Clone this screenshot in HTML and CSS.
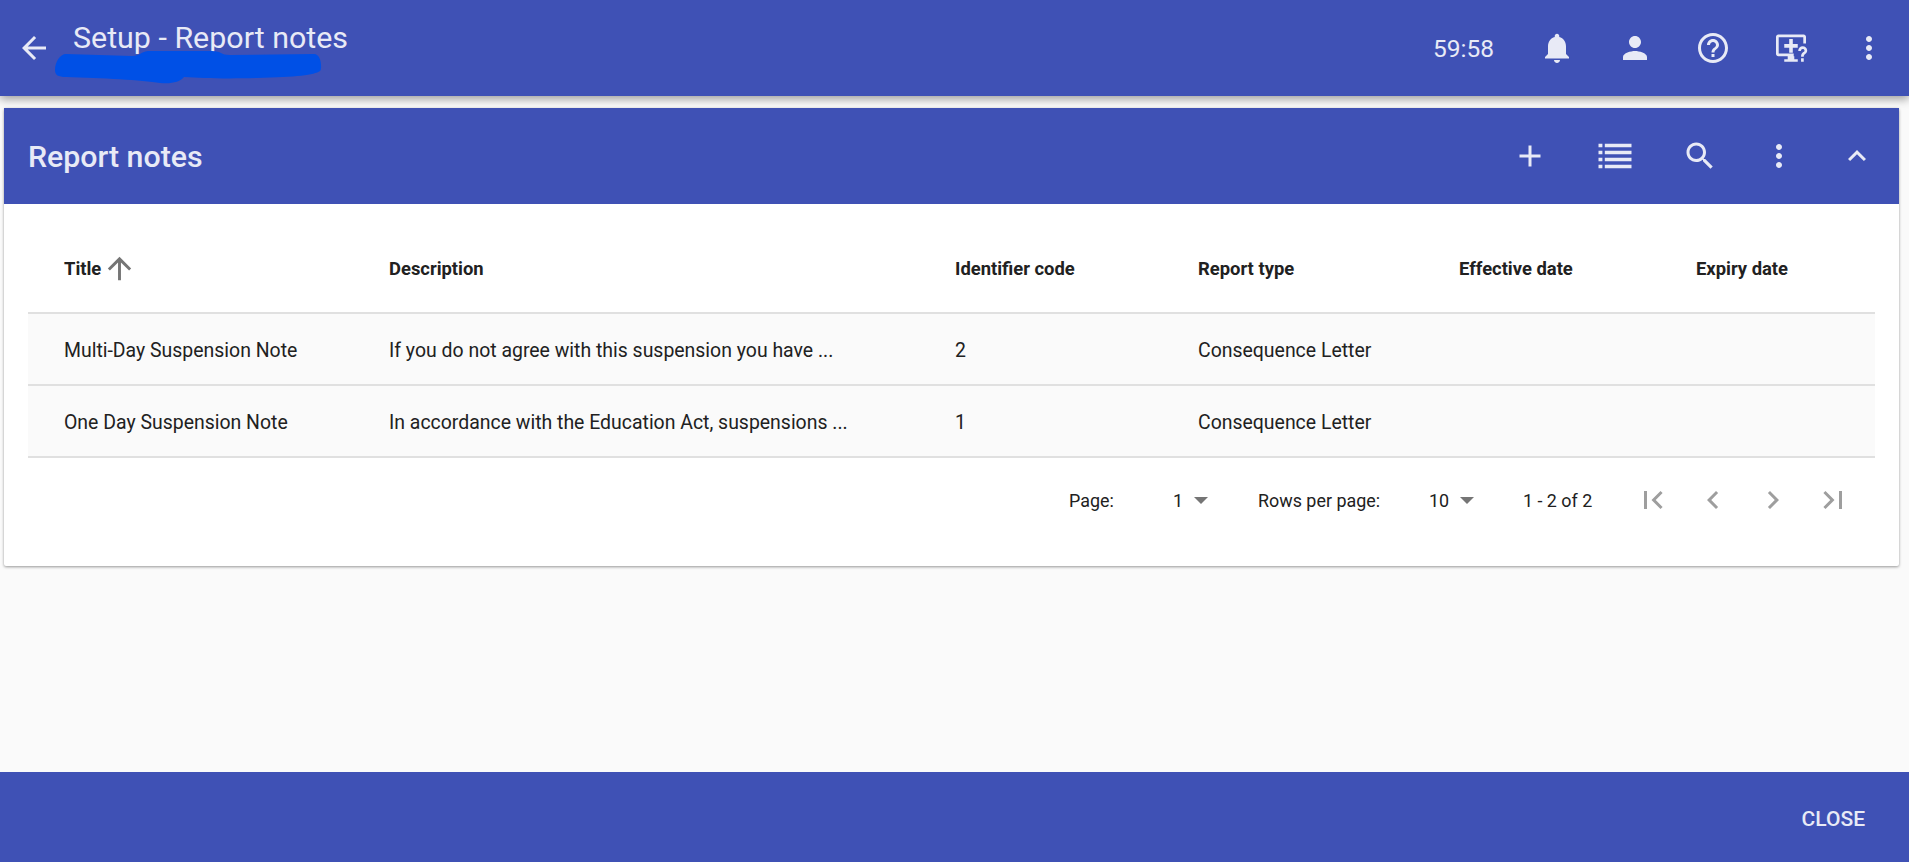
FILE: index.html
```html
<!DOCTYPE html>
<html lang="en">
<head>
<meta charset="utf-8">
<title>Setup - Report notes</title>
<link rel="stylesheet" href="styles.css">
</head>
<body>
<header class="topbar">
  <button class="icon-btn back"><svg class="ic" viewBox="0 0 24 24"><path d="M20 11H7.83l5.59-5.59L12 4l-8 8 8 8 1.41-1.41L7.83 13H20v-2z"/></svg></button>
  <h1 class="app-title">Setup - Report notes</h1>
  <svg class="scribble" viewBox="0 0 272 36"><path d="M3 20C3 12 8 4 14 4L80 6C88 6 88 2 96 1L160 1C170 1 168 5 178 5L262 4C270 4 270 20 268 21C262 25 245 27 205 28C170 29 150 28 132 27C128 32 120 34 108 33C90 30 50 28 14 27C6 27 3 25 3 20Z"/></svg>
  <div class="top-actions">
    <span class="clock">59:58</span>
    <button class="icon-btn"><svg class="ic" viewBox="0 0 24 24"><path d="M12 22c1.1 0 2-.9 2-2h-4c0 1.1.9 2 2 2zm6-6v-5c0-3.07-1.63-5.64-4.5-6.32V4c0-.83-.67-1.5-1.5-1.5s-1.5.67-1.5 1.5v.68C7.64 5.36 6 7.92 6 11v5l-2 2v1h16v-1l-2-2z"/></svg></button>
    <button class="icon-btn"><svg class="ic" viewBox="0 0 24 24"><path d="M12 12c2.21 0 4-1.79 4-4s-1.79-4-4-4-4 1.79-4 4 1.79 4 4 4zm0 2c-2.67 0-8 1.34-8 4v2h16v-2c0-2.66-5.33-4-8-4z"/></svg></button>
    <button class="icon-btn"><svg class="ic" viewBox="0 0 24 24"><path d="M11 18h2v-2h-2v2zm1-16C6.48 2 2 6.48 2 12s4.48 10 10 10 10-4.48 10-10S17.52 2 12 2zm0 18c-4.41 0-8-3.59-8-8s3.59-8 8-8 8 3.59 8 8-3.59 8-8 8zm0-14c-2.21 0-4 1.79-4 4h2c0-1.1.9-2 2-2s2 .9 2 2c0 2-3 1.75-3 5h2c0-2.25 3-2.5 3-5 0-2.21-1.79-4-4-4z"/></svg></button>
    <button class="icon-btn monitor"><svg class="ic" viewBox="0 0 24 24"><path d="M3.500 3h17c.8 0 1.500.7 1.500 1.500V9h-1.800V4.800H3.800v10.900h10V17.500H3.500c-.8 0-1.500-.7-1.500-1.500V4.500C2 3.700 2.700 3 3.500 3zM10.800 6h2.400v3.400h3.300v2.400h-3.300v3.400h-2.400v-3.400H7.500V9.400h3.300zM9.800 17.500h4.400v2h2.300v1.700H7.500v-1.700h2.300z"/><path d="M16.800 14c0-2 1.400-3.100 3-3.100s3 1.100 3 2.800c0 2.200-2.300 2.200-2.300 4.100h-1.800c0-3 2.300-2.800 2.300-4.100 0-.7-.5-1.100-1.200-1.100s-1.200.6-1.200 1.400zM18.700 18.900h1.800v2.200h-1.800z"/></svg></button>
    <button class="icon-btn"><svg class="ic" viewBox="0 0 24 24"><path d="M12 8c1.100 0 2-.9 2-2s-.9-2-2-2-2 .9-2 2 .9 2 2 2zm0 2c-1.100 0-2 .9-2 2s.9 2 2 2 2-.9 2-2-.9-2-2-2zm0 6c-1.100 0-2 .9-2 2s.9 2 2 2 2-.9 2-2-.9-2-2-2z"/></svg></button>
  </div>
</header>

<main class="content">
  <section class="card">
    <div class="card-head">
      <h2 class="card-title">Report notes</h2>
      <div class="card-actions">
        <button class="icon-btn w-add"><svg class="ic" viewBox="0 0 24 24"><path d="M19 13h-6v6h-2v-6H5v-2h6V5h2v6h6v2z"/></svg></button>
        <button class="icon-btn w-list"><svg class="ic" viewBox="0 0 24 24"><path d="M1 3.800h2.600v2.300H1zM5.200 3.800H23v2.300H5.200zM1 8.500h2.600v2.300H1zM5.200 8.500H23v2.300H5.200zM1 13.200h2.600v2.300H1zM5.200 13.200H23v2.300H5.200zM1 17.900h2.600v2.300H1zM5.200 17.900H23v2.300H5.200z"/></svg></button>
        <button class="icon-btn w-search"><svg class="ic" viewBox="0 0 24 24"><path d="M15.500 14h-.79l-.28-.27C15.410 12.590 16 11.110 16 9.500 16 5.910 13.090 3 9.500 3S3 5.910 3 9.500 5.910 16 9.500 16c1.610 0 3.090-.59 4.230-1.570l.27.28v.79l5 4.990L20.490 19l-4.990-5zm-6 0C7.010 14 5 11.990 5 9.500S7.010 5 9.500 5 14 7.010 14 9.500 11.990 14 9.500 14z"/></svg></button>
        <button class="icon-btn w-more"><svg class="ic" viewBox="0 0 24 24"><path d="M12 8c1.100 0 2-.9 2-2s-.9-2-2-2-2 .9-2 2 .9 2 2 2zm0 2c-1.100 0-2 .9-2 2s.9 2 2 2 2-.9 2-2-.9-2-2-2zm0 6c-1.100 0-2 .9-2 2s.9 2 2 2 2-.9 2-2-.9-2-2-2z"/></svg></button>
        <button class="icon-btn w-less"><svg class="ic" viewBox="0 0 24 24"><path d="M12 8l-6 6 1.410 1.410L12 10.830l4.590 4.580L18 14z"/></svg></button>
      </div>
    </div>

    <div class="card-body">
      <table class="grid">
        <colgroup>
          <col class="c-title"><col class="c-desc"><col class="c-id"><col class="c-type"><col class="c-eff"><col class="c-exp">
        </colgroup>
        <thead>
          <tr>
            <th><span class="sort">Title <svg class="sort-ic" viewBox="0 0 24 24"><path d="M4 12l1.410 1.410L11 7.830V20h2V7.830l5.580 5.590L20 12l-8-8-8 8z"/></svg></span></th>
            <th>Description</th>
            <th>Identifier code</th>
            <th>Report type</th>
            <th>Effective date</th>
            <th>Expiry date</th>
          </tr>
        </thead>
        <tbody>
          <tr>
            <td>Multi-Day Suspension Note</td>
            <td>If you do not agree with this suspension you have ...</td>
            <td>2</td>
            <td>Consequence Letter</td>
            <td></td>
            <td></td>
          </tr>
          <tr>
            <td>One Day Suspension Note</td>
            <td>In accordance with the Education Act, suspensions ...</td>
            <td>1</td>
            <td>Consequence Letter</td>
            <td></td>
            <td></td>
          </tr>
        </tbody>
      </table>

      <div class="pager">
        <span class="p-page">Page:</span>
        <span class="p-val p-val-page">1<i class="caret"></i></span>
        <span class="p-rows">Rows per page:</span>
        <span class="p-val p-val-rows">10<i class="caret"></i></span>
        <span class="p-range">1 - 2 of 2</span>
        <div class="p-nav">
          <button class="nav-btn"><svg class="ic" viewBox="0 0 24 24"><path d="M18.410 16.590L13.820 12l4.590-4.590L17 6l-6 6 6 6zM6 6h2v12H6z"/></svg></button>
          <button class="nav-btn"><svg class="ic" viewBox="0 0 24 24"><path d="M15.410 7.410L14 6l-6 6 6 6 1.410-1.410L10.830 12z"/></svg></button>
          <button class="nav-btn"><svg class="ic" viewBox="0 0 24 24"><path d="M10 6L8.590 7.410 13.170 12l-4.580 4.590L10 18l6-6z"/></svg></button>
          <button class="nav-btn"><svg class="ic" viewBox="0 0 24 24"><path d="M5.590 7.410L10.180 12l-4.590 4.590L7 18l6-6-6-6zM16 6h2v12h-2z"/></svg></button>
        </div>
      </div>
    </div>
  </section>
</main>

<footer class="footbar">
  <button class="close-btn">CLOSE</button>
</footer>
</body>
</html>
```
FILE: styles.css
```css
* { box-sizing: border-box; }
html, body { height: 100%; }
body {
  margin: 0;
  height: 862px;
  overflow: hidden;
  display: flex;
  flex-direction: column;
  background: #fafafa;
  font-family: Roboto, "Liberation Sans", sans-serif;
  color: #212121;
}
button {
  border: 0;
  padding: 0;
  background: none;
  color: inherit;
  font: inherit;
}
.ic { display: block; width: 36px; height: 36px; fill: currentColor; }

.topbar {
  position: relative;
  z-index: 2;
  flex: 0 0 96px;
  display: flex;
  align-items: center;
  background: #3f51b5;
  color: #e8eaf6;
  box-shadow: 0 3px 9px rgba(0, 0, 0, .38);
}
.icon-btn {
  flex: 0 0 78px;
  width: 78px;
  height: 48px;
  display: flex;
  align-items: center;
  justify-content: center;
}
.back { flex-basis: 36px; width: 36px; margin-left: 16px; }
.app-title {
  margin: 0 0 21px 21px;
  font-size: 30.4px;
  line-height: 36px;
  font-weight: 400;
}
.scribble {
  position: absolute;
  left: 52px;
  top: 50px;
  width: 272px;
  height: 36px;
  fill: #0050e6;
}
.top-actions { margin-left: auto; display: flex; align-items: center; padding-right: 1px; }
.clock { font-size: 24.5px; margin-right: 24px; }

.content { flex: 1; padding: 12px 10px 0 4px; min-height: 0; }
.card {
  height: 458px;
  display: flex;
  flex-direction: column;
  background: #fff;
  border-radius: 2px;
  box-shadow: 0 1px 3px rgba(0, 0, 0, .4);
}
.card-head {
  flex: 0 0 96px;
  display: flex;
  align-items: center;
  padding-left: 24px;
  background: #3f51b5;
  color: #e8eaf6;
}
.card-title { margin: 0; font-size: 30.3px; font-weight: 500; }
.card-actions { margin-left: auto; display: flex; align-items: center; padding-right: 3px; }
.w-add { flex-basis: 80px; width: 80px; }
.w-list { flex-basis: 90px; width: 90px; }
.w-search { flex-basis: 80px; width: 80px; }
.w-more { flex-basis: 78px; width: 78px; }
.w-less { flex-basis: 78px; width: 78px; }

.card-body { flex: 1; padding: 0 24px 0 24px; }
.grid {
  width: 100%;
  table-layout: fixed;
  border-collapse: collapse;
  font-size: 19.45px;
}
.c-title { width: 361px; }
.c-desc { width: 566px; }
.c-id { width: 243px; }
.c-type { width: 261px; }
.c-eff { width: 237px; }
.grid th {
  height: 109px;
  padding: 20px 0 0 36px;
  text-align: left;
  font-size: 18.4px;
  font-weight: 700;
  color: #212121;
  border-bottom: 2px solid #e0e0e0;
}
.grid th + th, .grid td + td { padding-left: 0; }
.grid td {
  height: 72px;
  padding: 2px 0 0 36px;
  background: #fafafa;
  border-bottom: 2px solid #e0e0e0;
  white-space: nowrap;
}
.sort { display: inline-flex; align-items: center; gap: 1px; }
.sort-ic { width: 35px; height: 35px; fill: #757575; }

.pager {
  height: 84px;
  display: flex;
  align-items: center;
  font-size: 17.9px;
  color: #212121;
}
.p-page { margin-left: 1041px; width: 104px; }
.p-val { display: flex; align-items: center; }
.p-val-page { width: 85px; }
.p-rows { width: 171px; }
.p-val-rows { width: 94px; }
.caret {
  margin-left: 11px;
  width: 0;
  height: 0;
  border-left: 7px solid transparent;
  border-right: 7px solid transparent;
  border-top: 7px solid #757575;
}
.p-range { width: 100px; }
.p-nav { display: flex; }
.nav-btn {
  flex: 0 0 60px;
  width: 60px;
  height: 48px;
  display: flex;
  align-items: center;
  justify-content: center;
  color: #9e9e9e;
}

.footbar {
  flex: 0 0 90px;
  display: flex;
  align-items: center;
  justify-content: flex-end;
  padding: 4px 44px 0 0;
  background: #3f51b5;
  color: #e8eaf6;
}
.close-btn { font-size: 21px; font-weight: 500; }
```
